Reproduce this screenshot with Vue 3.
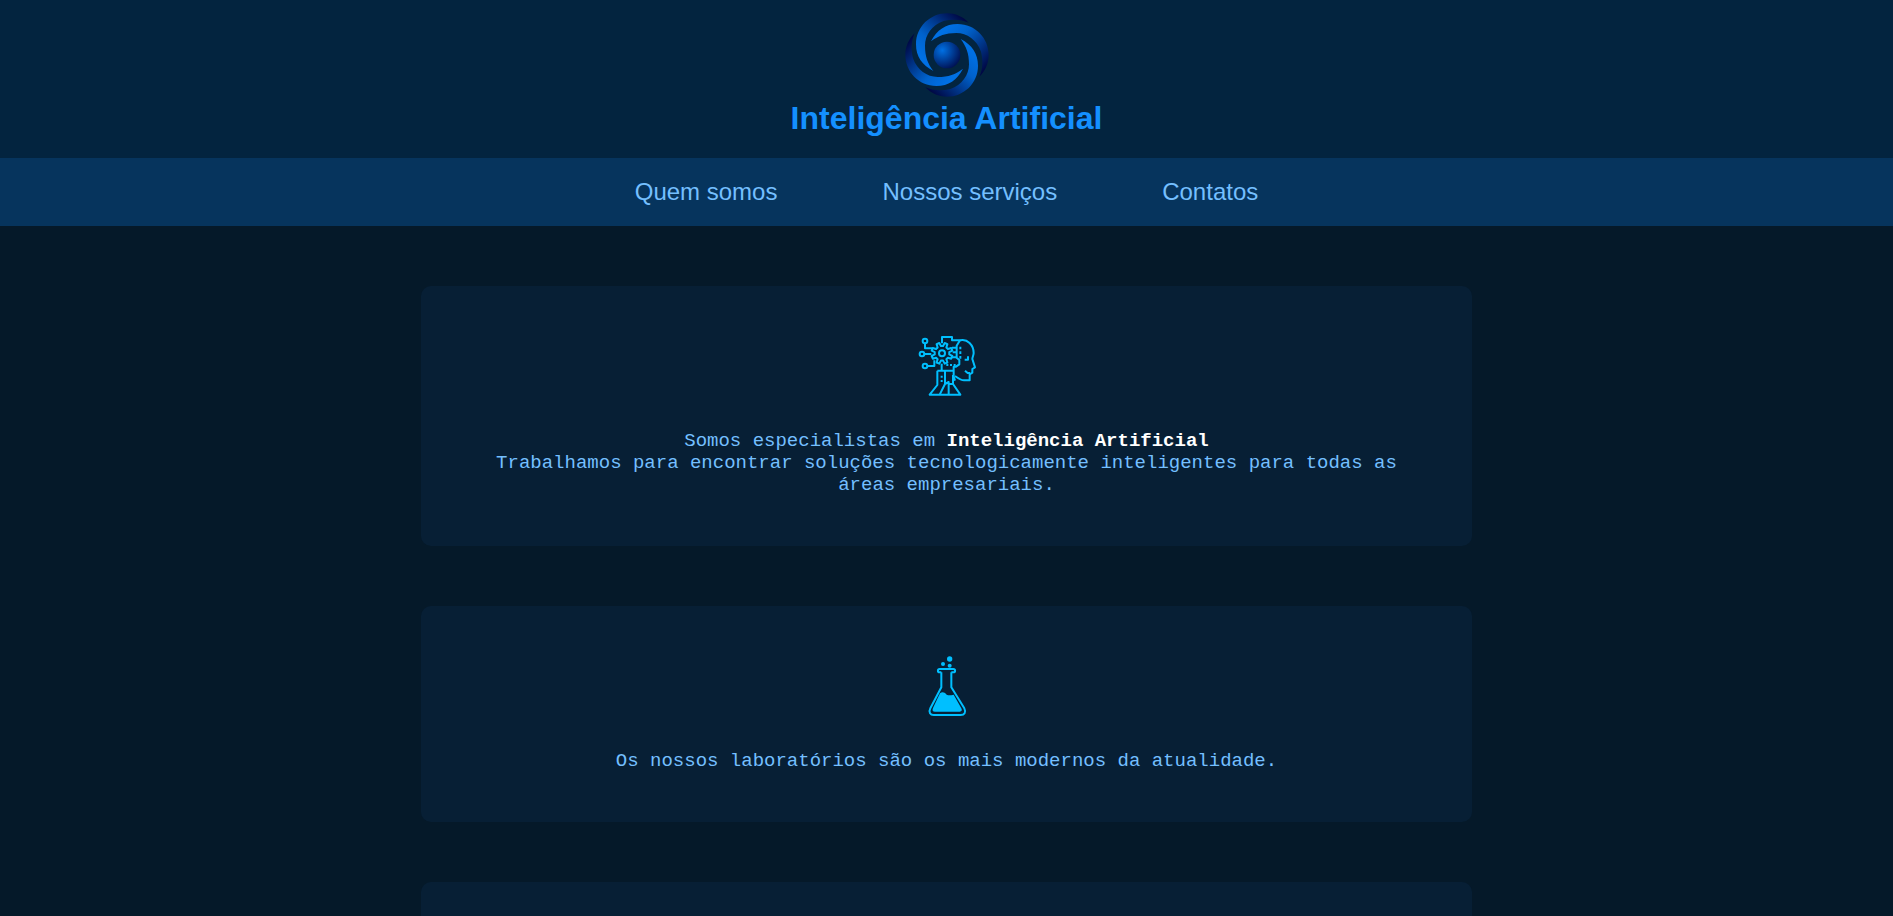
<script setup>
const links = [
  { label: 'Quem somos', href: '#quem-somos' },
  { label: 'Nossos serviços', href: '#servicos' },
  { label: 'Contatos', href: '#contatos' }
]
const blades = [0, 90, 180, 270]

// Eight-toothed gear outline centred on (cx, cy).
function gearPath(cx, cy, outer, inner) {
  const points = []
  for (let tooth = 0; tooth < 8; tooth++) {
    const middle = tooth * 45 + 22.5
    const corners = [[-14, inner], [-8, outer], [8, outer], [14, inner]]
    for (const [offset, radius] of corners) {
      const angle = ((middle + offset) * Math.PI) / 180
      points.push(`${(cx + radius * Math.cos(angle)).toFixed(1)} ${(cy + radius * Math.sin(angle)).toFixed(1)}`)
    }
  }
  return `M${points.join('L')}Z`
}
const gear = gearPath(112, 85, 32, 22)
</script>

<template>
  <div class="page">
    <header class="header">
      <svg class="logo" viewBox="-129 -129 258 258" aria-hidden="true">
        <defs>
          <linearGradient id="blade" gradientUnits="userSpaceOnUse" x1="-70" y1="10" x2="45" y2="-118">
            <stop offset="0" stop-color="#0070e4" />
            <stop offset="0.3" stop-color="#0062cc" />
            <stop offset="1" stop-color="#000540" />
          </linearGradient>
          <radialGradient id="core" gradientUnits="userSpaceOnUse" cx="-14" cy="-14" r="60">
            <stop offset="0" stop-color="#0070e4" />
            <stop offset="1" stop-color="#001052" />
          </radialGradient>
        </defs>
        <path
          v-for="angle in blades"
          :key="angle"
          :transform="`rotate(${angle})`"
          fill="url(#blade)"
          d="M-41 48C-75 30-93 5-93-32C-93-85-50-125 0-125C25-125 48-115 65-97C40-108 15-108-10-102C-45-90-66-60-66-28C-66 5-58 25-41 48Z"
        />
        <circle r="40" fill="url(#core)" />
      </svg>
      <h1 class="title">Inteligência Artificial</h1>
    </header>

    <nav class="nav">
      <a v-for="link in links" :key="link.href" :href="link.href">{{ link.label }}</a>
    </nav>

    <main class="content">
      <section id="quem-somos" class="card">
        <svg class="icon" viewBox="34 33 180 180" aria-hidden="true">
          <g fill="none" stroke="#00bfff" stroke-width="6" stroke-linejoin="round">
            <circle cx="61" cy="48" r="7" />
            <circle cx="52" cy="87" r="7" />
            <circle cx="61" cy="123" r="7" />
            <path d="M61 55V70H84M59 87H80M68 123H89V106" />
            <circle cx="112" cy="85" r="9" />
            <path :d="gear" />
            <path d="M112 55V36H142V46H166C188 40 207 60 207 84C207 91 203 96 203 102L211 127L203 132V143L195 148V166H178C168 166 158 158 151 153" />
            <path d="M166 46L156 62V98L164 105V118L154 125H147V155L151 167" />
            <path d="M142 68H156M144 82H156M142 97H156" />
            <path d="M190 94V104H180M181 137L189 144H196" />
            <path d="M111 116V136M98 137H147M98 137V180L75 209H167L145 177V150M121 137V177L105 209M121 177L132 171V209M132 177H145" />
          </g>
          <path d="M164 65h6v8h-6zM164 79h6v8h-6zM164 93h6v8h-6zM125 117h6v6h-6zM136 117h6v6h-6zM147 117h6v6h-6zM108 152h6v6h-6zM108 165h6v6h-6z" fill="#00bfff" />
        </svg>
        <p class="text">
          Somos especialistas em <strong>Inteligência Artificial</strong><br />
          Trabalhamos para encontrar soluções tecnologicamente inteligentes para todas as áreas empresariais.
        </p>
      </section>

      <section id="servicos" class="card">
        <svg class="icon" viewBox="34 33 180 180" aria-hidden="true">
          <g fill="#00bfff">
            <circle cx="135" cy="42" r="8" />
            <circle cx="115" cy="57" r="6" />
            <circle cx="135" cy="62" r="6" />
            <path d="M106 145C112 139 120 141 124 147C130 154 138 150 147 149L170 190C173 196 171 200 165 200H91C84 200 82 196 85 189Z" />
          </g>
          <path d="M110 82V127L77 190C71 202 77 210 87 210H168C179 210 185 202 179 190L140 127V82M110 82H105C98 82 98 72 105 72H146C153 72 153 82 146 82H140" fill="none" stroke="#00bfff" stroke-width="6" stroke-linejoin="round" />
        </svg>
        <p class="text">Os nossos laboratórios são os mais modernos da atualidade.</p>
      </section>

      <section id="contatos" class="card"></section>
    </main>
  </div>
</template>

<style>
body {
  margin: 0;
  background: #051929;
}
</style>

<style scoped>
.page {
  height: 100vh;
  overflow: hidden;
  font-family: Arial, "Liberation Sans", sans-serif;
  text-align: center;
  background: #051929;
}

.header {
  display: flex;
  flex-direction: column;
  align-items: center;
  gap: 2px;
  padding: 12px 20px 22px;
  background: #03243f;
}

.logo {
  width: 86px;
  height: 86px;
}

.title {
  margin: 0;
  font-size: 32px;
  line-height: 36px;
  color: #1490ff;
}

.nav {
  display: flex;
  justify-content: center;
  gap: 105px;
  padding: 20px;
  background: #06345d;
}

.nav a {
  font-size: 24px;
  line-height: 28px;
  color: #74bfff;
  text-decoration: none;
}

.content {
  display: flex;
  flex-direction: column;
  align-items: center;
  gap: 60px;
  padding: 60px 0;
}

.card {
  display: flex;
  flex-direction: column;
  align-items: center;
  gap: 34px;
  box-sizing: border-box;
  width: 55.5%;
  min-height: 216px;
  padding: 50px;
  border-radius: 10px;
  background: #071f35;
}

.icon {
  width: 60px;
  height: 60px;
}

.text {
  margin: 0;
  font-family: "Courier New", "Liberation Mono", monospace;
  font-size: 19px;
  line-height: 22px;
  color: #74bfff;
}

.text strong {
  color: #fff;
}
</style>
